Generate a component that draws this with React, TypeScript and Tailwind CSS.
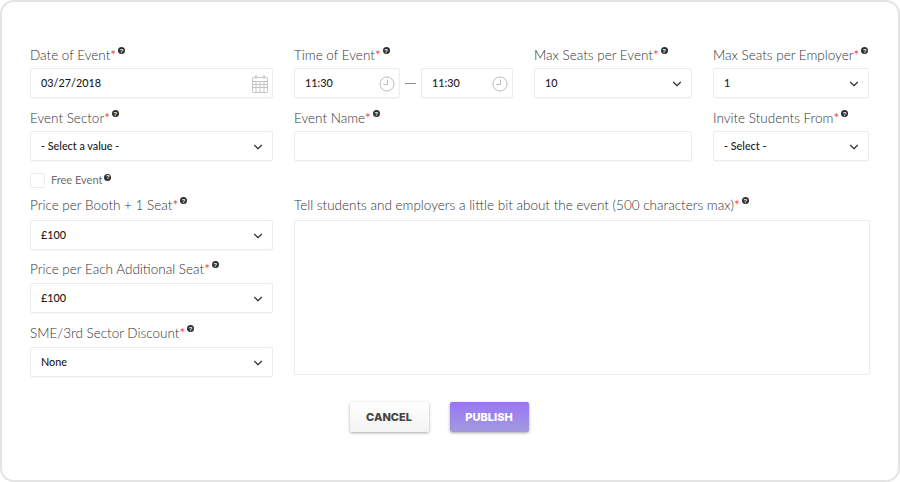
import React from 'react';
import { ChevronDown } from 'lucide-react';

function Hint() {
    return (
        <span className="ml-[2px] mt-[-2px] flex h-[7px] w-[7px] items-center justify-center self-start rounded-full bg-[#2f2f2f] font-['Liberation_Sans',sans-serif] text-[6px] font-bold leading-none text-white">
            ?
        </span>
    );
}

function Label({ text, required = true, className = '' }: { text: string; required?: boolean; className?: string }) {
    return (
        <div className={`flex h-[20px] items-start whitespace-nowrap text-[13.5px] font-light leading-[18px] text-[#333333] ${className}`}>
            <span>{text}</span>
            {required && <span className="font-normal text-[#f0494c]">*</span>}
            <span className="mt-[3px] flex"><Hint /></span>
        </div>
    );
}

const boxClass = 'flex h-[30px] items-center justify-between rounded-[2px] border border-[#ececec] bg-white text-[10.8px] font-medium text-[#1a1a1a] shadow-[0_1px_1px_rgba(0,0,0,0.03)]';

function SelectBox({ value }: { value: string }) {
    return (
        <div className={`${boxClass} pl-[10px] pr-[7px] pt-px`}>
            <span>{value}</span>
            <ChevronDown className="h-[14px] w-[14px] text-[#333333]" strokeWidth={2} />
        </div>
    );
}

function CalendarIcon() {
    return (
        <svg width="16" height="18" viewBox="0 0 16 18" fill="none" stroke="#c4c4c4" strokeWidth="1">
            <rect x="0.5" y="2.5" width="15" height="15" rx="1" />
            <path d="M0.5 6.5h15M0.5 9.5h15M0.5 12.5h15M4 6.5v11M8 6.5v11M12 6.5v11" />
            <circle cx="4" cy="2" r="1.2" fill="white" />
            <circle cx="12" cy="2" r="1.2" fill="white" />
        </svg>
    );
}

function ClockIcon() {
    return (
        <svg width="16" height="16" viewBox="0 0 16 16" fill="none" stroke="#bdbdbd" strokeWidth="1">
            <circle cx="8" cy="8" r="7" />
            <path d="M8.5 3.5v5h-4" />
        </svg>
    );
}

function TimeBox({ className }: { className: string }) {
    return (
        <div className={`${boxClass} pl-[10px] pr-[4px] pt-px ${className}`}>
            <span>11:30</span>
            <ClockIcon />
        </div>
    );
}

export default function App() {
    return (
        <div className="h-[482px] w-[900px] bg-white font-['Lato',sans-serif]">
            <div className="h-[482px] w-[900px] rounded-[14px] border-2 border-[#e4e4e4] px-[28px] pt-[44px]">
                <div className="grid grid-cols-[243px_219px_158px_156px] gap-x-[21px] gap-y-[11px]">
                    <div>
                        <Label text="Date of Event" className="mb-[2px]" />
                        <div className={`${boxClass} pl-[10px] pr-[4px] pt-px`}>
                            <span>03/27/2018</span>
                            <CalendarIcon />
                        </div>
                    </div>
                    <div>
                        <Label text="Time of Event" className="mb-[2px]" />
                        <div className="flex items-center">
                            <TimeBox className="w-[106px]" />
                            <span className="mx-[5px] h-px w-[11px] bg-[#8a8a8a]" />
                            <TimeBox className="w-[92px]" />
                        </div>
                    </div>
                    <div>
                        <Label text="Max Seats per Event" className="mb-[2px]" />
                        <SelectBox value="10" />
                    </div>
                    <div>
                        <Label text="Max Seats per Employer" className="mb-[2px]" />
                        <SelectBox value="1" />
                    </div>

                    <div>
                        <Label text="Event Sector" className="mb-[2px]" />
                        <SelectBox value="- Select a value -" />
                    </div>
                    <div className="col-span-2">
                        <Label text="Event Name" className="mb-[2px]" />
                        <div className={boxClass} />
                    </div>
                    <div>
                        <Label text="Invite Students From" className="mb-[2px]" />
                        <SelectBox value="- Select -" />
                    </div>
                </div>

                <div className="mt-[11px] flex h-[16px] items-center">
                    <span className="h-[15px] w-[15px] rounded-[2px] border border-[#ececec]" />
                    <span className="ml-[6px] text-[11px] text-[#707070]">Free Event</span>
                    <span className="mb-[4px] flex"><Hint /></span>
                </div>

                <div className="mt-[8px] flex gap-x-[21px]">
                    <div className="flex w-[243px] shrink-0 flex-col">
                        <Label text="Price per Booth + 1 Seat" className="mb-[4px]" />
                        <SelectBox value="£100" />
                        <Label text="Price per Each Additional Seat" className="mb-[3px] mt-[10px]" />
                        <SelectBox value="£100" />
                        <Label text="SME/3rd Sector Discount" className="mb-[3px] mt-[11px]" />
                        <SelectBox value="None" />
                    </div>
                    <div className="flex w-[576px] flex-col">
                        <Label text="Tell students and employers a little bit about the event (500 characters max)" className="mb-[4px]" />
                        <div className="h-[155px] rounded-[2px] border border-[#ececec] bg-white" />
                    </div>
                </div>

                <div className="mt-[25px] flex justify-center gap-x-[21px] pr-[22px]">
                    <button className="h-[30px] w-[79px] rounded-[2px] bg-gradient-to-b from-white to-[#f3f3f3] font-['Inter',sans-serif] text-[11px] font-extrabold text-[#444444] shadow-[0_1px_3px_rgba(0,0,0,0.35)]">
                        CANCEL
                    </button>
                    <button className="h-[30px] w-[79px] rounded-[2px] bg-gradient-to-b from-[#9a74f8] to-[#a399dc] font-['Inter',sans-serif] text-[11px] font-extrabold text-white shadow-[0_1px_3px_rgba(0,0,0,0.35)]">
                        PUBLISH
                    </button>
                </div>
            </div>
        </div>
    );
}
